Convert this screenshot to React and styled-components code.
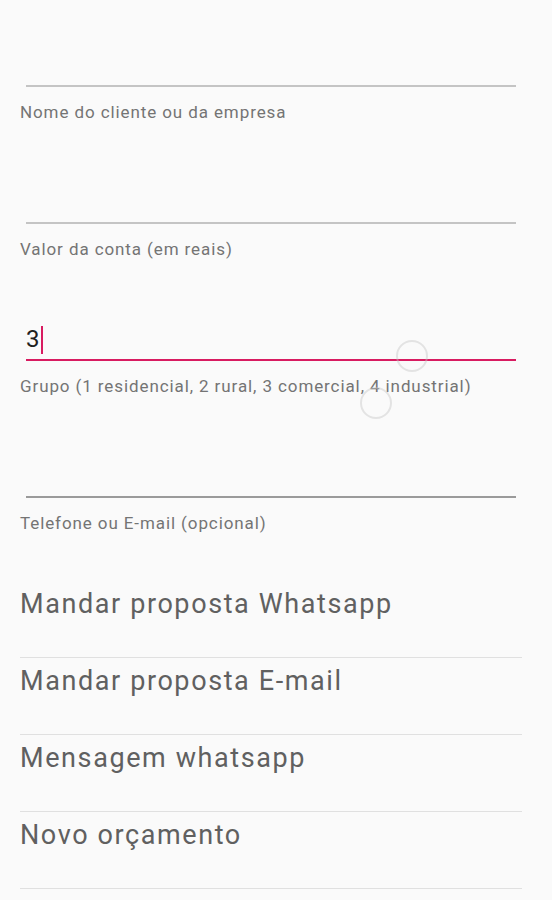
import React from "react";
import styled, { createGlobalStyle } from "styled-components";

const GlobalStyle = createGlobalStyle`
  html, body {
    margin: 0;
    padding: 0;
    background: #fafafa;
  }
  body {
    font-family: Roboto, "Noto Sans", "Liberation Sans", sans-serif;
  }
`;

const Screen = styled.div`
  position: relative;
  width: 552px;
  height: 900px;
  overflow: hidden;
  background: #fafafa;
  display: flex;
  flex-direction: column;
  padding-top: 35px;
  box-sizing: border-box;
`;

const Field = styled.div`
  display: flex;
  flex-direction: column;
  height: 137px;
`;

const InputArea = styled.div`
  height: 50px;
  margin: 0 36px 0 26px;
  display: flex;
  align-items: flex-end;
  padding-bottom: 6px;
  box-sizing: border-box;
  font-size: 24px;
  color: #212121;
  line-height: 28px;
`;

const Cursor = styled.span`
  display: inline-block;
  width: 2px;
  height: 28px;
  margin-left: 1px;
  background: #d81b60;
  align-self: flex-end;
  margin-bottom: -1px;
`;

const Underline = styled.div`
  height: 2px;
  margin: 0 36px 0 26px;
  background: ${(p) => p.$color || "#c4c4c4"};
`;

const Label = styled.div`
  margin: 15px 0 0 20px;
  font-size: 17px;
  letter-spacing: 0.9px;
  line-height: 20px;
  color: #747474;
`;

const Actions = styled.div`
  display: flex;
  flex-direction: column;
  margin-top: -2px;
`;

const ActionRow = styled.div`
  height: 77px;
  margin: 0 30px 0 20px;
  box-sizing: border-box;
  border-bottom: 1px solid #e0e0e0;
  padding-top: 7px;
  font-size: 27px;
  letter-spacing: 1.6px;
  line-height: 32px;
  color: #606060;
`;

const Touch = styled.div`
  position: absolute;
  width: 32px;
  height: 32px;
  border-radius: 50%;
  border: 2px solid rgba(200, 200, 200, 0.45);
  box-sizing: border-box;
  transform: translate(-50%, -50%);
`;

const fields = [
  { label: "Nome do cliente ou da empresa" },
  { label: "Valor da conta (em reais)" },
  { label: "Grupo (1 residencial, 2 rural, 3 comercial, 4 industrial)", value: "3", focused: true },
  { label: "Telefone ou E-mail (opcional)", line: "#9a9a9a" },
];

const actions = [
  "Mandar proposta Whatsapp",
  "Mandar proposta E-mail",
  "Mensagem whatsapp",
  "Novo orçamento",
];

export default function App() {
  return (
    <>
      <GlobalStyle />
      <Screen>
        {fields.map((f) => (
          <Field key={f.label}>
            <InputArea>
              {f.value}
              {f.focused && <Cursor />}
            </InputArea>
            <Underline $color={f.focused ? "#d81b60" : f.line} />
            <Label>{f.label}</Label>
          </Field>
        ))}
        <Actions>
          {actions.map((a) => (
            <ActionRow key={a}>{a}</ActionRow>
          ))}
        </Actions>
        <Touch style={{ left: 412, top: 356 }} />
        <Touch style={{ left: 376, top: 403 }} />
      </Screen>
    </>
  );
}
